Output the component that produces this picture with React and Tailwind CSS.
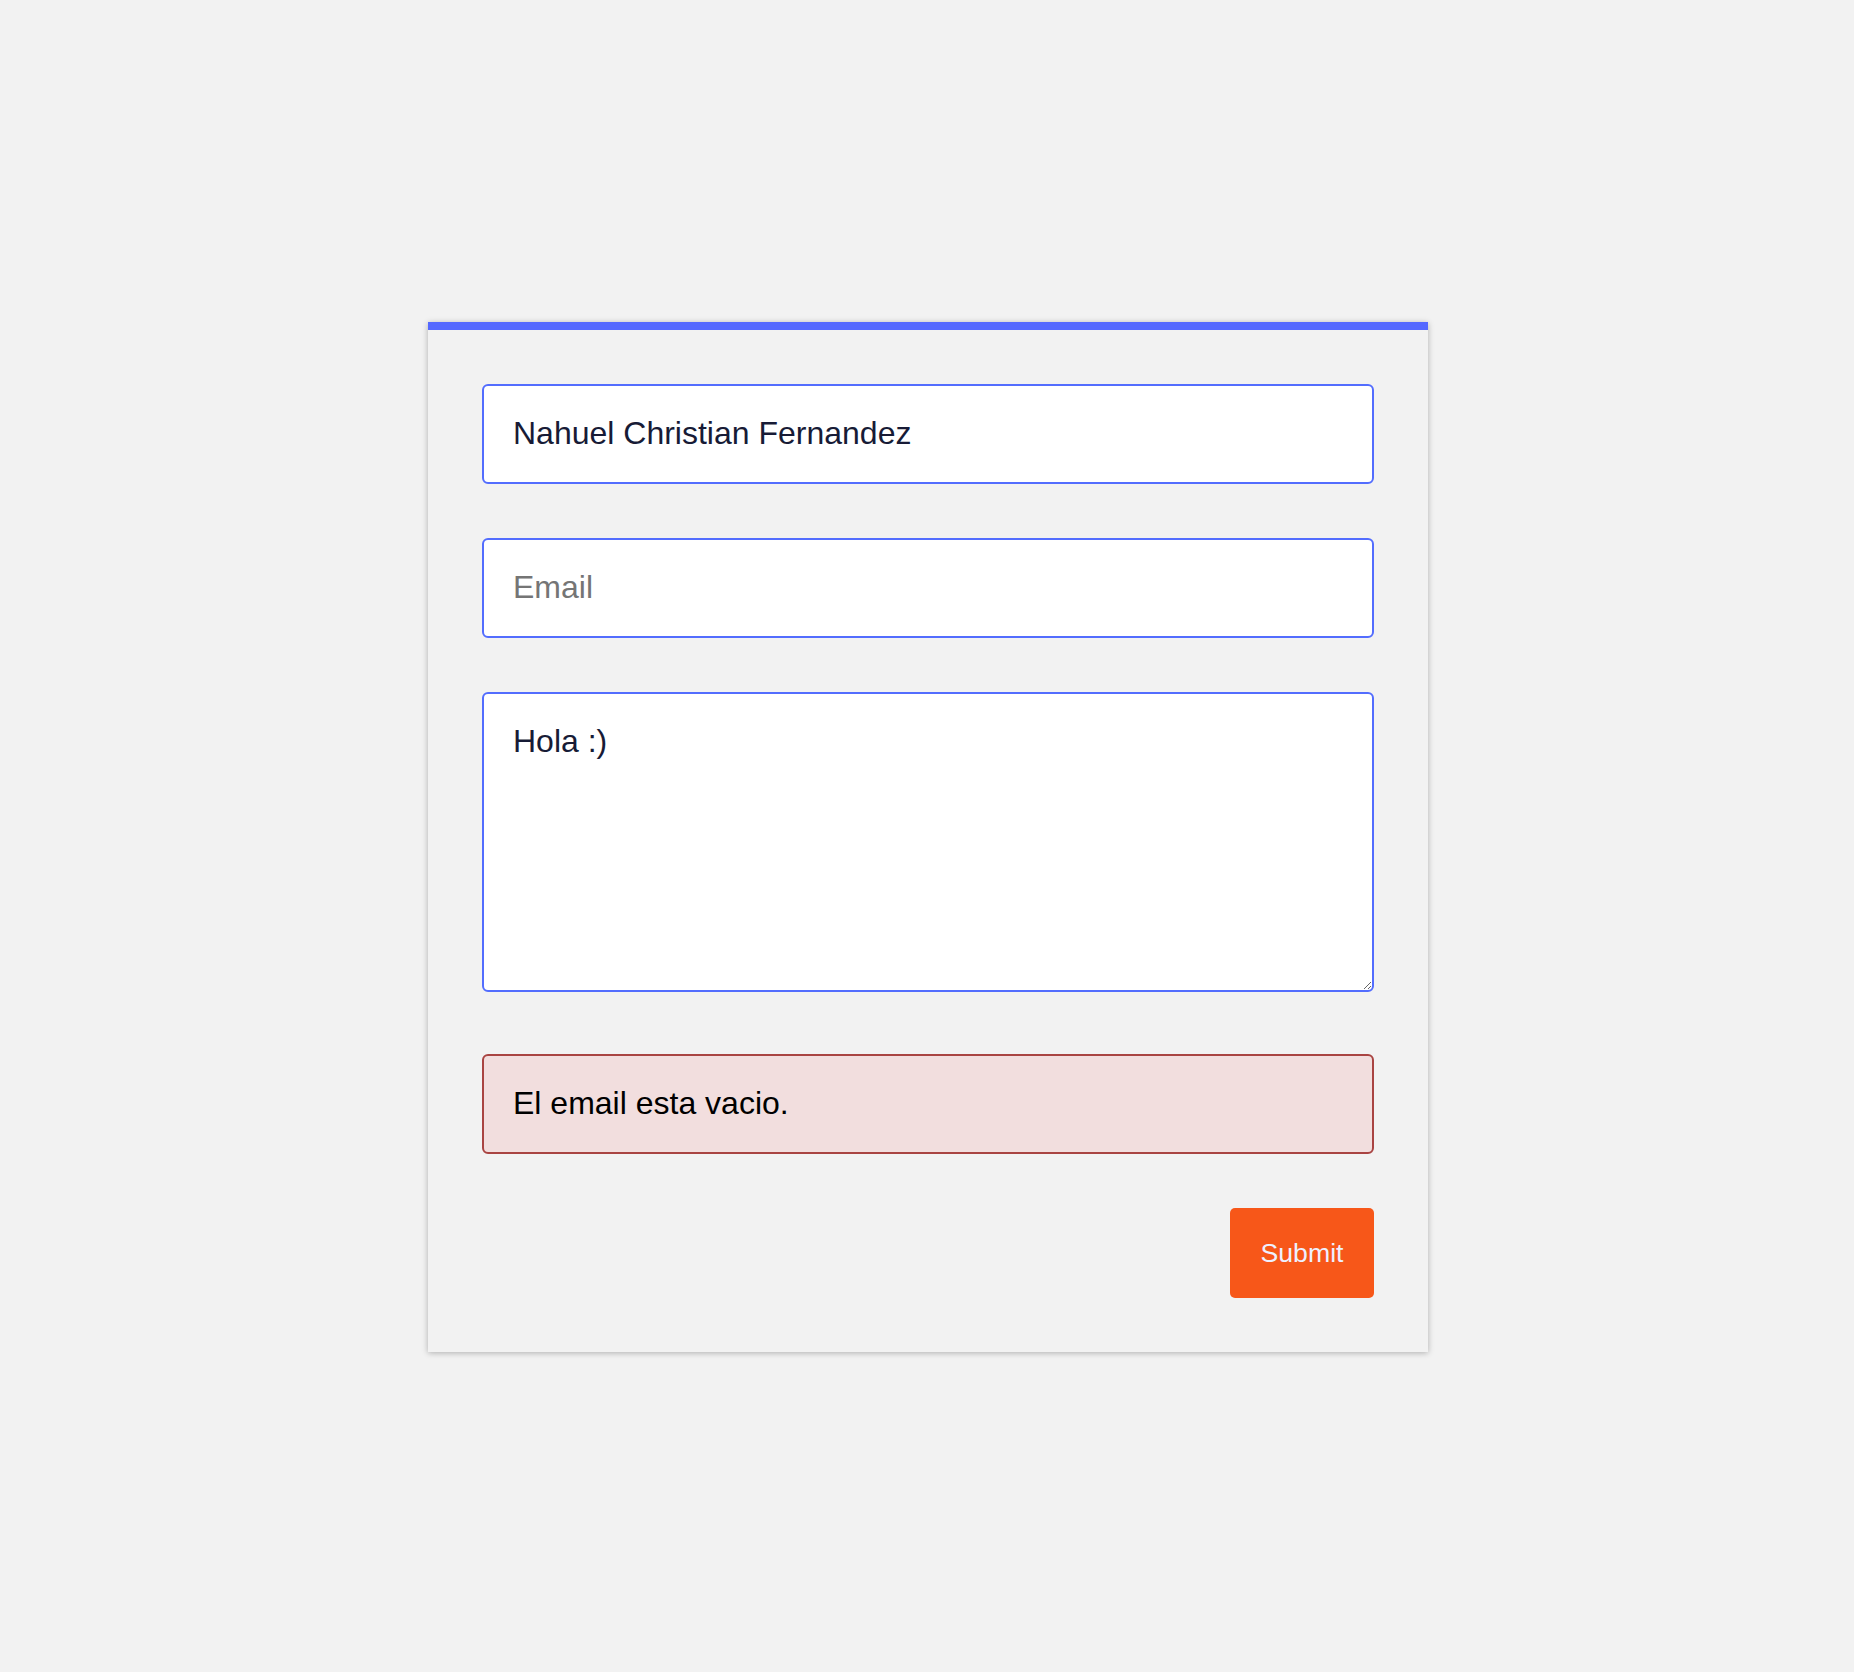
import { useState } from "react";

export default function App() {
    const [name, setName] = useState("Nahuel Christian Fernandez");
    const [email, setEmail] = useState("");
    const [message, setMessage] = useState("Hola :)");

    const fieldClass =
        "block w-full rounded-[6px] border-2 border-[#536dfe] bg-white px-[29px] text-[32px] leading-[normal] text-[#171b36] outline-none placeholder:text-[#757575]";

    return (
        <div className="flex min-h-screen items-center justify-center bg-[#f2f2f2] pl-[2px] pt-[2px] font-['Liberation_Sans',Arial,sans-serif]">
            <div className="w-[1000px] border-t-8 border-[#5468ff] bg-[#f2f2f2] p-[54px] shadow-[0_1px_6px_rgba(0,0,0,0.28)]">
                <form className="flex flex-col" onSubmit={(e) => e.preventDefault()}>
                    <input
                        className={`${fieldClass} h-[100px] pb-[2px]`}
                        type="text"
                        placeholder="Nombre"
                        value={name}
                        onChange={(e) => setName(e.target.value)}
                    />
                    <input
                        className={`${fieldClass} mt-[54px] h-[100px] pb-[2px]`}
                        type="email"
                        placeholder="Email"
                        value={email}
                        onChange={(e) => setEmail(e.target.value)}
                    />
                    <textarea
                        className={`${fieldClass} mt-[54px] h-[300px] py-[29px]`}
                        value={message}
                        onChange={(e) => setMessage(e.target.value)}
                    />
                    <div className="mt-[62px] flex h-[100px] items-center rounded-[6px] border-2 border-[#a94442] bg-[#f2dede] px-[29px] pb-[2px] text-[32px] text-black">
                        El email esta vacio.
                    </div>
                    <div className="mt-[54px] flex justify-end">
                        <button
                            type="submit"
                            className="h-[90px] w-[144px] rounded-[5px] bg-[#f75719] text-[26.67px] text-[#eef0ff]"
                        >
                            Submit
                        </button>
                    </div>
                </form>
            </div>
        </div>
    );
}
